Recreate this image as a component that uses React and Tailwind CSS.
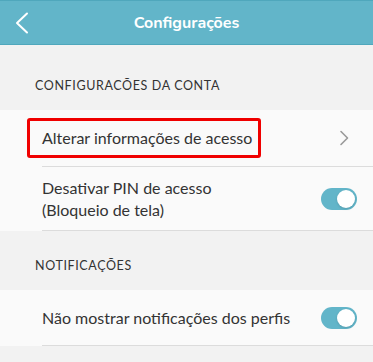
function Toggle() {
  return (
    <div className="relative h-[22px] w-[36px] rounded-full bg-[#62b5c9]">
      <div className="absolute right-[2px] top-[2px] h-[18px] w-[18px] rounded-full bg-white shadow-sm" />
    </div>
  );
}

function SectionTitle({ children, h }) {
  return (
    <div className={`flex items-end pb-[15px] pl-[35px] text-[12.5px] leading-[18px] tracking-[0.05em] text-[#333] ${h}`}>
      {children}
    </div>
  );
}

export default function App() {
  return (
    <div className="h-[362px] w-[373px] overflow-hidden bg-[#f2f2f2] font-['Lato',sans-serif]">
      {/* header */}
      <div className="flex h-[45px] items-center border-y border-[#4fa7bc] bg-[#62b5c9]">
        <div className="flex w-[48px] items-center pl-[14px] text-white">
          <svg width="18" height="22" viewBox="0 0 18 22" fill="none" stroke="currentColor" strokeWidth="2" strokeLinecap="round" strokeLinejoin="round">
            <polyline points="13,1.5 3,11 13,20.5" />
          </svg>
        </div>
        <div className="flex-1 pr-[48px] text-center text-[16px] font-bold text-white font-['Nunito','Lato',sans-serif]">
          Configurações
        </div>
      </div>

      <SectionTitle h="h-[65px]">CONFIGURACÕES DA CONTA</SectionTitle>

      <div className="bg-[#fafafa]">
        <div className="ml-[42px] flex h-[57px] items-center border-b border-[#dcdcdc] pr-[24px]">
          <div className="-ml-[15px] flex h-[40px] w-[234px] items-center rounded-[3px] border-[3px] border-[#f00000] pl-[12px] text-[16px] text-[#333]">
            Alterar informações de acesso
          </div>
          <svg className="ml-auto text-[#999]" width="10" height="16" viewBox="0 0 10 16" fill="none" stroke="currentColor" strokeWidth="1.6" strokeLinecap="round" strokeLinejoin="round">
            <polyline points="2,1.5 8.5,8 2,14.5" />
          </svg>
        </div>
        <div className="ml-[42px] flex h-[64px] items-center border-b border-[#dcdcdc] pr-[16px]">
          <div className="text-[16px] leading-[22px] text-[#333]">
            Desativar PIN de acesso
            <br />
            (Bloqueio de tela)
          </div>
          <div className="ml-auto">
            <Toggle />
          </div>
        </div>
      </div>

      <SectionTitle h="h-[59px]">NOTIFICAÇÕES</SectionTitle>

      <div className="bg-[#fafafa]">
        <div className="ml-[42px] flex h-[56px] items-center border-b border-[#dcdcdc] pr-[16px]">
          <div className="text-[16px] text-[#333]">Não mostrar notificações dos perfis</div>
          <div className="ml-auto">
            <Toggle />
          </div>
        </div>
      </div>
    </div>
  );
}
